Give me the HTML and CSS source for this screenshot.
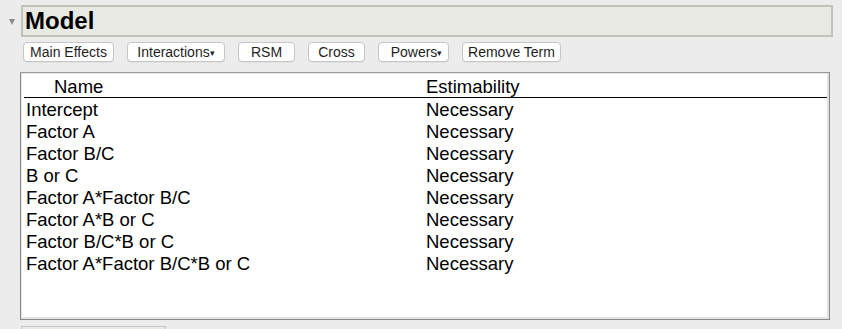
FILE: index.html
```html
<!DOCTYPE html>
<html lang="en">
<head>
<meta charset="UTF-8">
<title>Model</title>
<link rel="stylesheet" href="styles.css">
</head>
<body>
<div class="outline">
    <div class="title-row">
        <span class="disclosure"></span>
        <div class="title-box"><h2>Model</h2></div>
    </div>
    <div class="buttons">
        <button class="btn w-main">Main Effects</button>
        <button class="btn w-inter">Interactions<span class="caret">&#9662;</span></button>
        <button class="btn w-rsm">RSM</button>
        <button class="btn w-cross">Cross</button>
        <button class="btn w-powers">Powers<span class="caret">&#9662;</span></button>
        <button class="btn w-remove">Remove Term</button>
    </div>
    <div class="effects">
        <div class="effects-head">
            <span class="col-name head-name">Name</span>
            <span class="col-est">Estimability</span>
        </div>
        <div class="effects-body">
            <div class="row"><span class="col-name">Intercept</span><span class="col-est">Necessary</span></div>
            <div class="row"><span class="col-name">Factor A</span><span class="col-est">Necessary</span></div>
            <div class="row"><span class="col-name">Factor B/C</span><span class="col-est">Necessary</span></div>
            <div class="row"><span class="col-name">B or C</span><span class="col-est">Necessary</span></div>
            <div class="row"><span class="col-name">Factor A*Factor B/C</span><span class="col-est">Necessary</span></div>
            <div class="row"><span class="col-name">Factor A*B or C</span><span class="col-est">Necessary</span></div>
            <div class="row"><span class="col-name">Factor B/C*B or C</span><span class="col-est">Necessary</span></div>
            <div class="row"><span class="col-name">Factor A*Factor B/C*B or C</span><span class="col-est">Necessary</span></div>
        </div>
    </div>
    <div class="next-box"></div>
</div>
</body>
</html>
```

FILE: styles.css
```css
body {
    margin: 0;
    background-color: #ececec;
    font-family: "Liberation Sans", Arial, sans-serif;
    color: #000;
    overflow: hidden;
}
.outline {
    padding: 5px 0 0 0;
}
.title-row {
    display: flex;
    align-items: center;
}
.disclosure {
    width: 0;
    height: 0;
    margin: 1px 6px 0 9px;
    border-left: 3.5px solid transparent;
    border-right: 3.5px solid transparent;
    border-top: 6px solid #8c8c8c;
}
.title-box {
    width: 808px;
    height: 28px;
    background-color: #e9e9e3;
    border: 2px solid #c2c2bb;
    display: flex;
    align-items: center;
}
.title-box h2 {
    margin: 0 0 0 2px;
    font-size: 24px;
    font-weight: bold;
    line-height: 28px;
}
.buttons {
    display: flex;
    gap: 13px;
    margin: 5px 0 0 23px;
}
.btn {
    height: 20px;
    padding: 0;
    background-color: #fff;
    border: 1px solid #c6c6c6;
    border-radius: 4px;
    font-family: "Liberation Sans", Arial, sans-serif;
    font-size: 14px;
    color: #1e1e1e;
    text-align: center;
    box-shadow: 0 0.5px 0 rgba(0, 0, 0, 0.08);
}
.caret {
    font-size: 9px;
    margin-left: 0;
    vertical-align: 1px;
}
.w-main { width: 91px; }
.w-inter { width: 98px; }
.w-rsm { width: 57px; }
.w-cross { width: 57px; }
.w-powers { width: 71px; padding-left: 6px; }
.w-remove { width: 99px; }
.effects {
    width: 803px;
    height: 246px;
    margin: 10px 0 0 20px;
    background-color: #fff;
    border: 1px solid #8a8a8a;
    border-top-color: #9a9a9a;
    box-shadow: inset -2px -2px 0 #e2e2e2, inset 1px 1px 0 #e6e6e6;
    padding: 0 2px 0 3px;
}
.effects-head {
    display: flex;
    height: 24px;
    align-items: flex-end;
    border-bottom: 1px solid #000;
    font-size: 18.5px;
    line-height: 21px;
}
.effects-body {
    padding-top: 1px;
}
.row {
    display: flex;
    height: 22px;
    align-items: center;
    font-size: 18.5px;
}
.col-name {
    width: 400px;
    padding-left: 2px;
}
.head-name {
    padding-left: 30px;
    width: 372px;
}
.col-est {
    flex: 1;
}
.next-box {
    width: 143px;
    height: 10px;
    margin: 6px 0 0 21px;
    border: 1px solid #c6c6c6;
    background-color: #e9e9e3;
}
```
